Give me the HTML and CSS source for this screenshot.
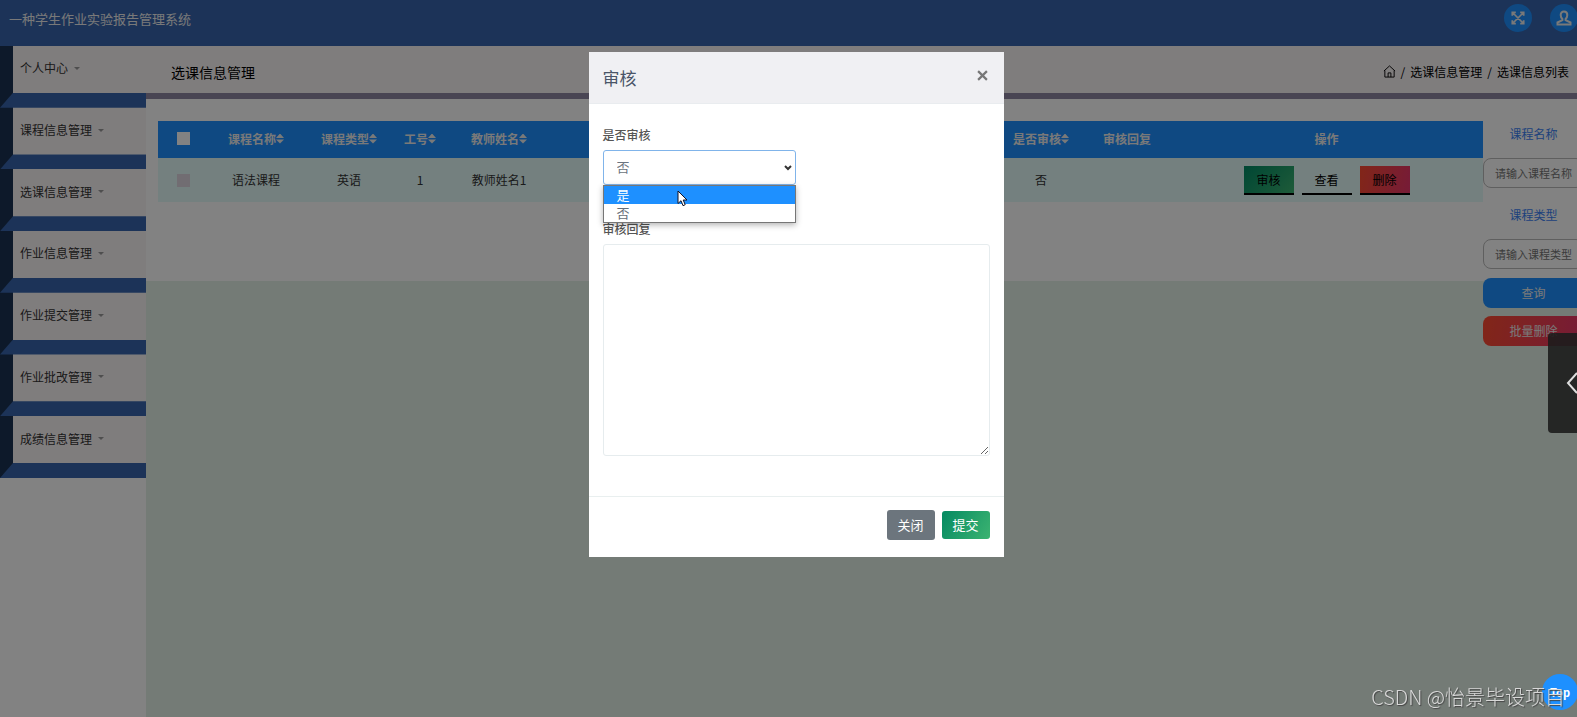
FILE: index.html
```html
<!DOCTYPE html>
<html lang="zh-CN">
<head>
<meta charset="utf-8">
<title>一种学生作业实验报告管理系统</title>
<link rel="stylesheet" href="styles.css">
</head>
<body>
<header class="topbar">
  <span class="brand">一种学生作业实验报告管理系统</span>
  <button class="round" type="button" aria-label="全屏"><svg viewBox="0 0 16 16" width="14" height="14"><path d="M1.500 5.500v-4h4M10.500 1.500h4v4M14.500 10.500v4h-4M5.500 14.500h-4v-4M2 2l12 12M14 2L2 14"/></svg></button>
  <button class="round" type="button" aria-label="用户"><svg viewBox="0 0 16 16" width="16" height="16"><path d="M8 1.500C5.900 1.500 4.700 3 4.700 5c0 1.700.7 3 1.700 3.900v1.300L1.500 12.500v2h13v-2L9.600 10.200V8.900c1-.9 1.700-2.200 1.700-3.900 0-2-1.200-3.500-3.300-3.500z"/></svg></button>
</header>

<div class="layout">
  <nav class="sidebar">
    <ul class="menu">
      <li class="item"><i class="side"></i><a class="face" href="#">个人中心<i class="caret"></i></a><i class="base"></i></li>
      <li class="item"><i class="side"></i><a class="face" href="#">课程信息管理<i class="caret"></i></a><i class="base"></i></li>
      <li class="item"><i class="side"></i><a class="face" href="#">选课信息管理<i class="caret"></i></a><i class="base"></i></li>
      <li class="item"><i class="side"></i><a class="face" href="#">作业信息管理<i class="caret"></i></a><i class="base"></i></li>
      <li class="item"><i class="side"></i><a class="face" href="#">作业提交管理<i class="caret"></i></a><i class="base"></i></li>
      <li class="item"><i class="side"></i><a class="face" href="#">作业批改管理<i class="caret"></i></a><i class="base"></i></li>
      <li class="item"><i class="side"></i><a class="face" href="#">成绩信息管理<i class="caret"></i></a><i class="base"></i></li>
    </ul>
  </nav>

  <main class="main">
    <div class="titlebar">
      <h1 class="title">选课信息管理</h1>
      <div class="crumbs">
        <svg viewBox="0 0 14 14" width="13" height="13"><path d="M1 6.500L7 1l6 5.500M2 6v7h10V6M5.500 13V8.500h3V13"/></svg>
        <span>/</span><a href="#">选课信息管理</a><span>/</span><a href="#">选课信息列表</a>
      </div>
    </div>
    <section class="panel">
      <table class="grid">
        <colgroup><col class="c50"><col class="c96"><col class="c90"><col class="c52"><col class="c106"><col><col class="c86"><col class="c86"><col class="c315"></colgroup>
        <thead>
          <tr>
            <th><input class="tick" type="checkbox" aria-label="全选"></th>
            <th>课程名称<i class="sort"></i></th>
            <th>课程类型<i class="sort"></i></th>
            <th>工号<i class="sort"></i></th>
            <th>教师姓名<i class="sort"></i></th>
            <th></th>
            <th>是否审核<i class="sort"></i></th>
            <th>审核回复</th>
            <th>操作</th>
          </tr>
        </thead>
        <tbody>
          <tr>
            <td><input class="tick dim" type="checkbox" aria-label="选择"></td>
            <td>语法课程</td>
            <td>英语</td>
            <td>1</td>
            <td>教师姓名1</td>
            <td></td>
            <td>否</td>
            <td></td>
            <td><div class="ops"><button class="op green" type="button">审核</button><button class="op" type="button">查看</button><button class="op red" type="button">删除</button></div></td>
          </tr>
        </tbody>
      </table>
      <form class="search">
        <label for="q1">课程名称</label>
        <input id="q1" type="text" placeholder="请输入课程名称">
        <label for="q2">课程类型</label>
        <input id="q2" type="text" placeholder="请输入课程类型">
        <button class="query" type="button">查询</button>
        <button class="batch" type="button">批量删除</button>
      </form>
    </section>
  </main>
</div>

<div class="backdrop">
  <div class="modal" role="dialog" aria-labelledby="dlg">
    <div class="modal-head">
      <h2 id="dlg">审核</h2>
      <button class="close" type="button" aria-label="关闭窗口"><svg viewBox="0 0 10 10" width="11" height="11"><path d="M1 1l8 8M9 1L1 9"/></svg></button>
    </div>
    <div class="modal-body">
      <label for="audit">是否审核</label>
      <div class="picker">
        <select id="audit"><option>是</option><option selected>否</option></select>
        <svg class="arrow" viewBox="0 0 8 6" width="8" height="6"><path d="M1 1l3 3 3-3"/></svg>
        <ul class="options"><li class="on">是</li><li>否</li></ul>
        <svg class="pointer" viewBox="0 0 11 17" width="11" height="17"><path d="M1 1v12.500l3-2.800 2 5 2.200-1-2-4.700H10z"/></svg>
      </div>
      <label for="reply">审核回复</label>
      <textarea id="reply"></textarea>
    </div>
    <div class="modal-foot">
      <button class="cancel" type="button">关闭</button>
      <button class="submit" type="button">提交</button>
    </div>
  </div>
</div>

<button class="drawer" type="button" aria-label="展开"><svg viewBox="0 0 20 22" width="20" height="22"><path d="M12 1L3 11l9 10"/></svg></button>
<button class="totop" type="button">Top</button>
<div class="mark">CSDN @怡景毕设项目</div>
</body>
</html>
```
FILE: styles.css
```css
* { box-sizing: border-box; }
body {
  margin: 0;
  min-height: 100vh;
  display: flex;
  flex-direction: column;
  overflow: hidden;
  background: #e4f1e8;
  color: #333;
  font: 12px/18px "Noto Sans CJK SC", sans-serif;
}
button, input, select, textarea { font: inherit; color: inherit; margin: 0; }
button { border: 0; padding: 0; background: none; }
a { color: inherit; text-decoration: none; }
ul { list-style: none; margin: 0; padding: 0; }
h1, h2 { margin: 0; font-weight: 400; }
svg { fill: none; stroke: currentColor; }

.topbar {
  height: 46px;
  display: flex;
  gap: 18px;
  padding: 4px 0 0 9px;
  margin-right: -1px;
  background: #3865ac;
}
.brand { flex: 1; font-size: 13px; line-height: 30px; color: #eee; }
.round {
  width: 28px;
  height: 28px;
  display: grid;
  place-items: center;
  border-radius: 50%;
  background: #1e90ff;
  color: #eee;
}
.round svg { stroke-width: 2; }

.layout { flex: 1; display: flex; }
.sidebar { width: 146px; background: #fff; }
.menu { display: grid; grid-auto-rows: 1fr; min-height: 432px; }
.item { display: grid; grid-template: 1fr 15px / 13px 1fr; }
.side {
  grid-area: 1 / 1 / 3 / 2;
  background: #1a3254;
}
.face {
  grid-area: 1 / 2;
  display: flex;
  align-items: center;
  gap: 6px;
  padding: 0 0 2px 7px;
  background: #faf5f6;
}
.base {
  grid-area: 2 / 1 / 3 / 3;
  background: #3865ac;
  clip-path: polygon(13px 0, 100% 0, 100% 100%, 0 100%);
}
.caret { border: 3px solid transparent; border-top-color: #999; border-bottom: 0; }

.main { flex: 1; min-width: 0; }
.titlebar {
  display: flex;
  justify-content: space-between;
  align-items: center;
  height: 53px;
  padding: 0 8px 0 25px;
  border-bottom: 6px solid #9088a4;
  background: #faf5f6;
}
.title { font-size: 14px; line-height: 20px; padding-top: 4px; color: #000; }
.crumbs { display: flex; align-items: center; gap: 5px; padding-top: 4px; color: #000; }

.panel {
  display: flex;
  align-items: flex-start;
  height: 182px;
  margin-right: -7px;
  padding: 22px 0 0 12px;
  background: #fff;
}
.grid { flex: 1; width: 0; table-layout: fixed; border-collapse: collapse; text-align: center; }
.grid th, .grid td { padding: 0; }
.grid th { height: 37px; padding-bottom: 2px; background: #1e90ff; color: #eee; }
.grid td { height: 44px; background: #e4fbfa; }
.c50 { width: 50px; }
.c52 { width: 52px; }
.c86 { width: 86px; }
.c90 { width: 90px; }
.c96 { width: 96px; }
.c106 { width: 106px; }
.c315 { width: 313px; }
.tick {
  appearance: none;
  width: 13px;
  height: 13px;
  display: block;
  margin: 0 auto;
  background: #fff;
}
.tick.dim { background: #ded6e0; }
.sort {
  display: inline-block;
  width: 8px;
  height: 10px;
  background: #eee;
  clip-path: polygon(50% 0, 100% 45%, 0 45%, 0 60%, 100% 60%, 50% 100%, 0 60%, 0 45%);
}
.ops { display: flex; justify-content: center; gap: 8px; padding-top: 1px; }
.op { width: 50px; height: 29px; border-bottom: 2px solid #000; color: #000; }
.green { background: linear-gradient(135deg, #008b66, #3cb371); }
.red { background: linear-gradient(100deg, #ff4b30, #e8366c); }

.search { width: 101px; display: flex; flex-direction: column; text-align: center; }
.search label { height: 37px; padding-top: 4px; color: #3c82f4; }
.search input {
  height: 30px;
  margin-bottom: 14px;
  width: 100%;
  padding: 0;
  border: 1px solid #bbb;
  border-radius: 8px;
  background: #fff;
  font-size: 11px;
  text-align: center;
}
.search input::placeholder { color: #757575; }
.search #q2 { margin-bottom: 9px; }
.query, .batch { height: 30px; border-radius: 8px; color: #eee; background: #1e90ff; }
.batch { margin-top: 8px; background: linear-gradient(100deg, #ff4b30, #e8366c); }

.backdrop {
  position: fixed;
  inset: 0;
  display: flex;
  justify-content: center;
  align-items: flex-start;
  padding: 52px 0 0 15px;
  background: rgba(0, 0, 0, .49);
}
.modal { width: 415px; background: #fff; }
.modal-head {
  display: flex;
  justify-content: space-between;
  align-items: center;
  height: 52px;
  padding: 0 16px 0 14px;
  border-bottom: 1px solid #e9ecef;
  background: #f0f0f3;
}
.modal-head h2 { font-size: 17px; line-height: 24px; color: #4a5568; }
.close { display: flex; padding-bottom: 4px; color: #777; }
.close svg { stroke-width: 2; }
.modal-body { display: flex; flex-direction: column; padding: 22px 14px 40px; }
.modal-body label { line-height: 18px; margin-bottom: 6px; font-weight: 500; color: #555; }
.picker { position: relative; width: 193px; margin-bottom: 35px; }
.picker select {
  appearance: none;
  display: block;
  width: 100%;
  height: 35px;
  padding: 0 13px 1px;
  border: 1px solid #80b4ea;
  border-radius: 3px;
  background: #fff;
  font-size: 13px;
  color: #6b7480;
}
.arrow { position: absolute; right: 4px; top: 15px; color: #333; stroke-width: 2; }
.options {
  position: absolute;
  top: 35px;
  left: 0;
  right: 0;
  border: 1px solid #767676;
  background: #fff;
  box-shadow: 0 2px 6px rgba(0, 0, 0, .3);
  font-size: 13px;
  line-height: 18px;
  color: #666e78;
}
.options li { padding-left: 13px; }
.options .on { background: #1e90ff; color: #fff; }
.pointer { position: absolute; left: 74px; top: 40px; fill: #fff; stroke: #112; }
textarea {
  display: block;
  height: 212px;
  border: 1px solid #e6ecee;
  border-radius: 3px;
  resize: vertical;
}
.modal-foot {
  display: flex;
  justify-content: flex-end;
  align-items: center;
  gap: 7px;
  padding: 13px 14px 17px;
  border-top: 1px solid #e9efef;
}
.cancel, .submit { width: 48px; border-radius: 3px; color: #fff; font-size: 13px; line-height: 30px; }
.cancel { background: #6c757d; }
.submit { line-height: 28px; background: linear-gradient(120deg, #058a62, #3cb371); }

.drawer {
  position: fixed;
  right: 0;
  top: 333px;
  width: 29px;
  height: 100px;
  padding-left: 17px;
  border-radius: 4px 0 0 4px;
  background: rgba(28, 28, 28, .9);
  color: #ddd;
  overflow: hidden;
}
.drawer svg { display: block; stroke-width: 2; }
.totop {
  position: fixed;
  right: -1px;
  bottom: 7px;
  width: 36px;
  height: 36px;
  border-radius: 50%;
  background: #1e90ff;
  color: #fff;
  font-weight: 700;
  font-size: 11px;
}
.mark {
  position: fixed;
  right: 12px;
  bottom: 6px;
  font-size: 20px;
  font-weight: 300;
  line-height: 28px;
  color: #d8d8d8;
  text-shadow: 1px 1px 1px #444;
}
```
